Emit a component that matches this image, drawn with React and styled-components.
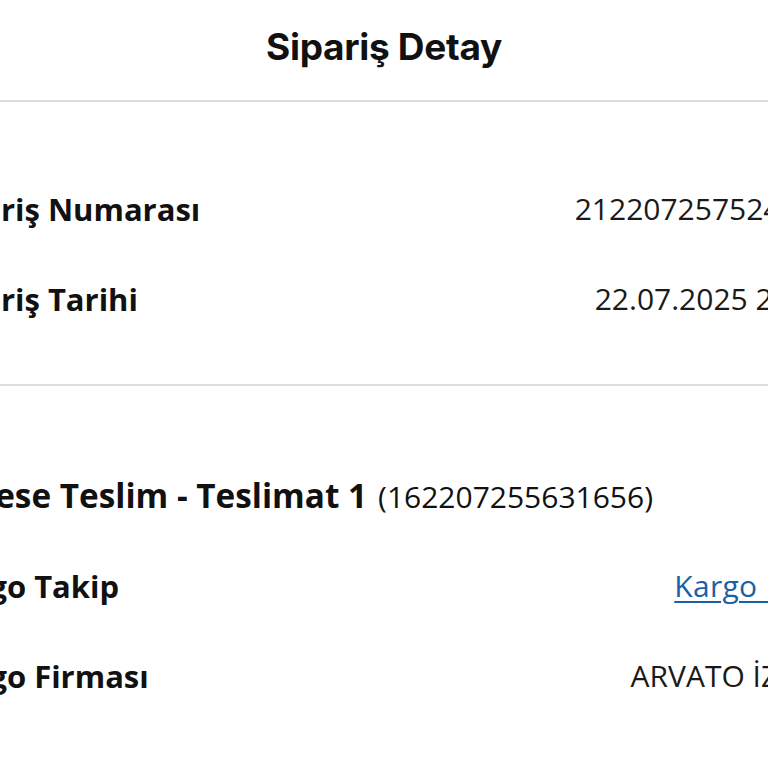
import styled, { createGlobalStyle } from 'styled-components';

const GlobalStyle = createGlobalStyle`
  html, body {
    margin: 0;
    padding: 0;
    background: #ffffff;
    overflow: hidden;
  }
`;

const Page = styled.div`
  width: 896px;
  margin-left: -64px;
  background: #ffffff;
  color: #111111;
  font-family: "Open Sans", "Noto Sans", sans-serif;
`;

const Header = styled.header`
  height: 102px;
  box-sizing: border-box;
  padding-bottom: 7px;
  display: flex;
  align-items: center;
  justify-content: center;
  border-bottom: 2px solid #dcdcdc;
`;

const Title = styled.h1`
  margin: 0;
  font-family: Inter, "Liberation Sans", sans-serif;
  font-size: 37px;
  font-weight: 700;
  letter-spacing: -0.3px;
  color: #111111;
`;

const Section = styled.section`
  padding: ${(p) => p.$top}px 0 ${(p) => p.$bottom}px;
  border-bottom: ${(p) => (p.$divider ? '2px solid #dcdcdc' : 'none')};
`;

const Row = styled.div`
  height: 90px;
  display: flex;
  align-items: center;
  justify-content: space-between;
  font-size: 30px;
  line-height: 90px;
  white-space: nowrap;
`;

const Label = styled.span`
  font-size: ${(p) => (p.$heading ? 33.3 : 31)}px;
  font-weight: 700;
`;

const Value = styled.span`
  font-weight: 400;
  color: #1a1a1a;
`;

const SubValue = styled.span`
  font-size: 30px;
  font-weight: 400;
  margin-left: 11px;
`;

const Link = styled.a`
  color: #1b5fa6;
  letter-spacing: 0.3px;
  text-decoration: underline;
  text-underline-offset: 4px;
  text-decoration-thickness: 2px;
`;

export default function App() {
  return (
    <>
      <GlobalStyle />
      <Page>
        <Header>
          <Title>Sipariş Detay</Title>
        </Header>
        <Section $top={62} $bottom={40} $divider>
          <Row>
            <Label>Sipariş Numarası</Label>
            <Value>212207257524716</Value>
          </Row>
          <Row>
            <Label>Sipariş Tarihi</Label>
            <Value>22.07.2025 21:34</Value>
          </Row>
        </Section>
        <Section $top={65} $bottom={40}>
          <Row>
            <Label $heading>
              Adrese Teslim - Teslimat 1<SubValue>(162207255631656)</SubValue>
            </Label>
          </Row>
          <Row>
            <Label>Kargo Takip</Label>
            <Link href="#">Kargo Linki</Link>
          </Row>
          <Row>
            <Label>Kargo Firması</Label>
            <Value>ARVATO İZMİR</Value>
          </Row>
        </Section>
      </Page>
    </>
  );
}
